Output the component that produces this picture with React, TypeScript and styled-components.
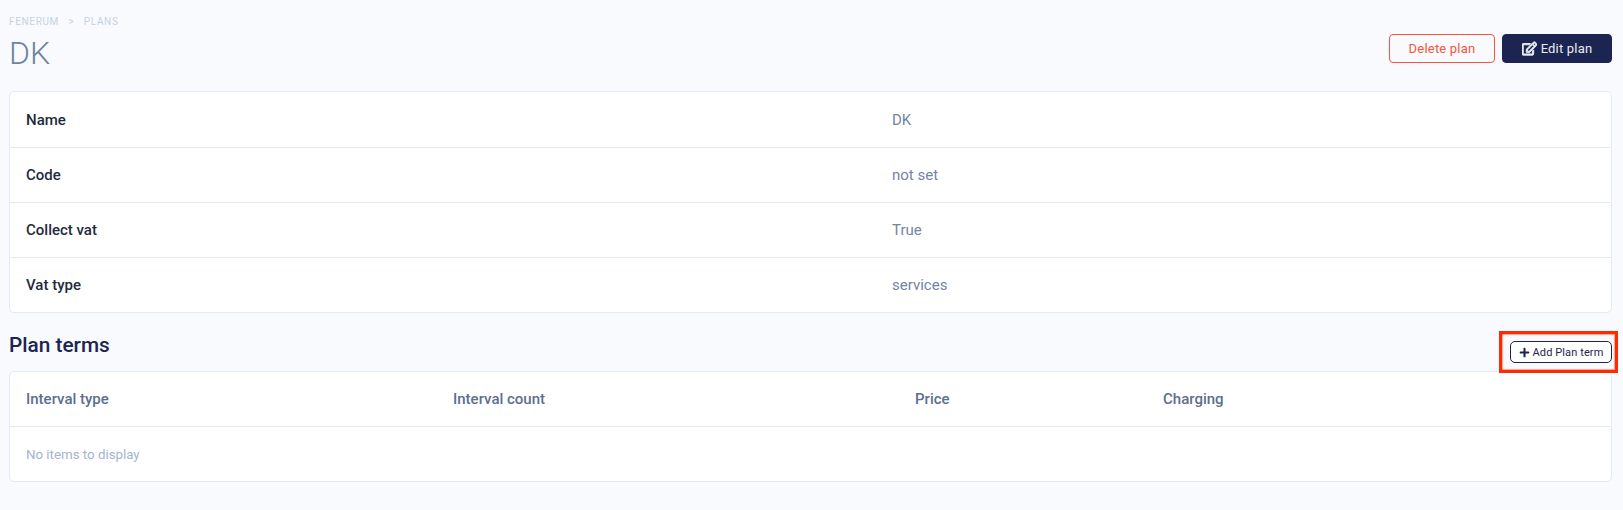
import { FaPlus, FaRegEdit } from "react-icons/fa";
import styled, { createGlobalStyle } from "styled-components";

const GlobalStyle = createGlobalStyle`
  html, body {
    margin: 0;
    background: #f9fafd;
    font-family: Roboto, "Liberation Sans", sans-serif;
  }
`;

const Page = styled.div`
  width: 1623px;
  height: 510px;
  padding: 15px 11px 0 9px;
  box-sizing: border-box;
  overflow: hidden;
`;

const Header = styled.div`
  display: flex;
  justify-content: space-between;
  align-items: flex-start;
  height: 76px;
`;

const Breadcrumb = styled.div`
  display: flex;
  gap: 9.5px;
  height: 13px;
  font-size: 10px;
  line-height: 13px;
  letter-spacing: 0.65px;
  color: #c5d2e3;
`;

const Title = styled.h1`
  margin: 5px 0 0;
  font-size: 32px;
  line-height: 40px;
  font-weight: 300;
  color: #6c84a5;
`;

const Actions = styled.div`
  display: flex;
  gap: 7px;
  margin-top: 19px;
`;

const Button = styled.button<{ $variant: "danger" | "primary" }>`
  height: 29px;
  width: ${(p) => (p.$variant === "danger" ? "106px" : "110px")};
  padding: 0;
  display: flex;
  align-items: center;
  justify-content: center;
  gap: 4px;
  border-radius: 4px;
  border: 1px solid ${(p) => (p.$variant === "danger" ? "#f5543a" : "#1c2551")};
  background: ${(p) => (p.$variant === "danger" ? "transparent" : "#1c2551")};
  color: ${(p) => (p.$variant === "danger" ? "#f5543a" : "#e9ecf4")};
  font-family: inherit;
  font-size: 13px;
  letter-spacing: 0.2px;
  box-sizing: border-box;
`;

const EditIcon = styled(FaRegEdit)`
  stroke: currentColor;
  stroke-width: 36px;
`;

const Card = styled.div`
  background: #fff;
  border: 1px solid #e2eaf6;
  border-radius: 5px;
  box-sizing: border-box;
`;

const DetailRow = styled.div`
  display: grid;
  grid-template-columns: 866px 1fr;
  align-items: center;
  height: 55px;
  padding-left: 16px;
  font-size: 15px;
  box-sizing: border-box;

  & + & {
    border-top: 1px solid #e2eaf6;
  }
`;

const Label = styled.div`
  font-weight: 500;
  color: #1f2b40;
`;

const Value = styled.div`
  color: #72859f;
`;

const SectionHeader = styled.div`
  display: flex;
  justify-content: space-between;
  height: 58px;
  box-sizing: border-box;
`;

const SectionTitle = styled.h2`
  margin: 20px 0 0;
  font-size: 20.8px;
  line-height: 25px;
  font-weight: 500;
  color: #1c2551;
`;

const AddWrap = styled.div`
  position: relative;
  margin: 28px 0 0;
`;

const AddButton = styled.button`
  width: 102px;
  height: 22px;
  padding: 0;
  display: flex;
  align-items: center;
  justify-content: center;
  gap: 3px;
  border: 1px solid #1c2551;
  border-radius: 5px;
  background: #fff;
  color: #1c2551;
  font-family: inherit;
  font-size: 11px;
  letter-spacing: 0.1px;
  box-sizing: border-box;
`;

const Highlight = styled.div`
  position: absolute;
  left: -11px;
  top: -10px;
  width: 119px;
  height: 42px;
  border: 3px solid #ff2a00;
  box-shadow: inset 0 0 1px 0.5px #ff5a38;
  box-sizing: border-box;
  pointer-events: none;
`;

const TermsHead = styled.div`
  display: grid;
  grid-template-columns: 427px 462px 248px 1fr;
  align-items: center;
  height: 55px;
  padding-left: 16px;
  border-bottom: 1px solid #e2eaf6;
  box-sizing: border-box;
`;

const TermsCol = styled.div`
  font-size: 15px;
  font-weight: 500;
  color: #5b6f8e;
`;

const EmptyRow = styled.div`
  display: flex;
  align-items: center;
  height: 54px;
  padding-left: 16px;
  font-size: 13.3px;
  color: #a3b4cf;
`;

const details = [
  { label: "Name", value: "DK" },
  { label: "Code", value: "not set" },
  { label: "Collect vat", value: "True" },
  { label: "Vat type", value: "services" },
];

const columns = ["Interval type", "Interval count", "Price", "Charging"];

export default function App() {
  return (
    <Page>
      <GlobalStyle />
      <Header>
        <div>
          <Breadcrumb>
            <span>FENERUM</span>
            <span>&gt;</span>
            <span>PLANS</span>
          </Breadcrumb>
          <Title>DK</Title>
        </div>
        <Actions>
          <Button $variant="danger">Delete plan</Button>
          <Button $variant="primary">
            <EditIcon size={15} />
            Edit plan
          </Button>
        </Actions>
      </Header>
      <Card>
        {details.map((row) => (
          <DetailRow key={row.label}>
            <Label>{row.label}</Label>
            <Value>{row.value}</Value>
          </DetailRow>
        ))}
      </Card>
      <SectionHeader>
        <SectionTitle>Plan terms</SectionTitle>
        <AddWrap>
          <AddButton>
            <FaPlus size={11} />
            Add Plan term
          </AddButton>
          <Highlight />
        </AddWrap>
      </SectionHeader>
      <Card>
        <TermsHead>
          {columns.map((col) => (
            <TermsCol key={col}>{col}</TermsCol>
          ))}
        </TermsHead>
        <EmptyRow>No items to display</EmptyRow>
      </Card>
    </Page>
  );
}
